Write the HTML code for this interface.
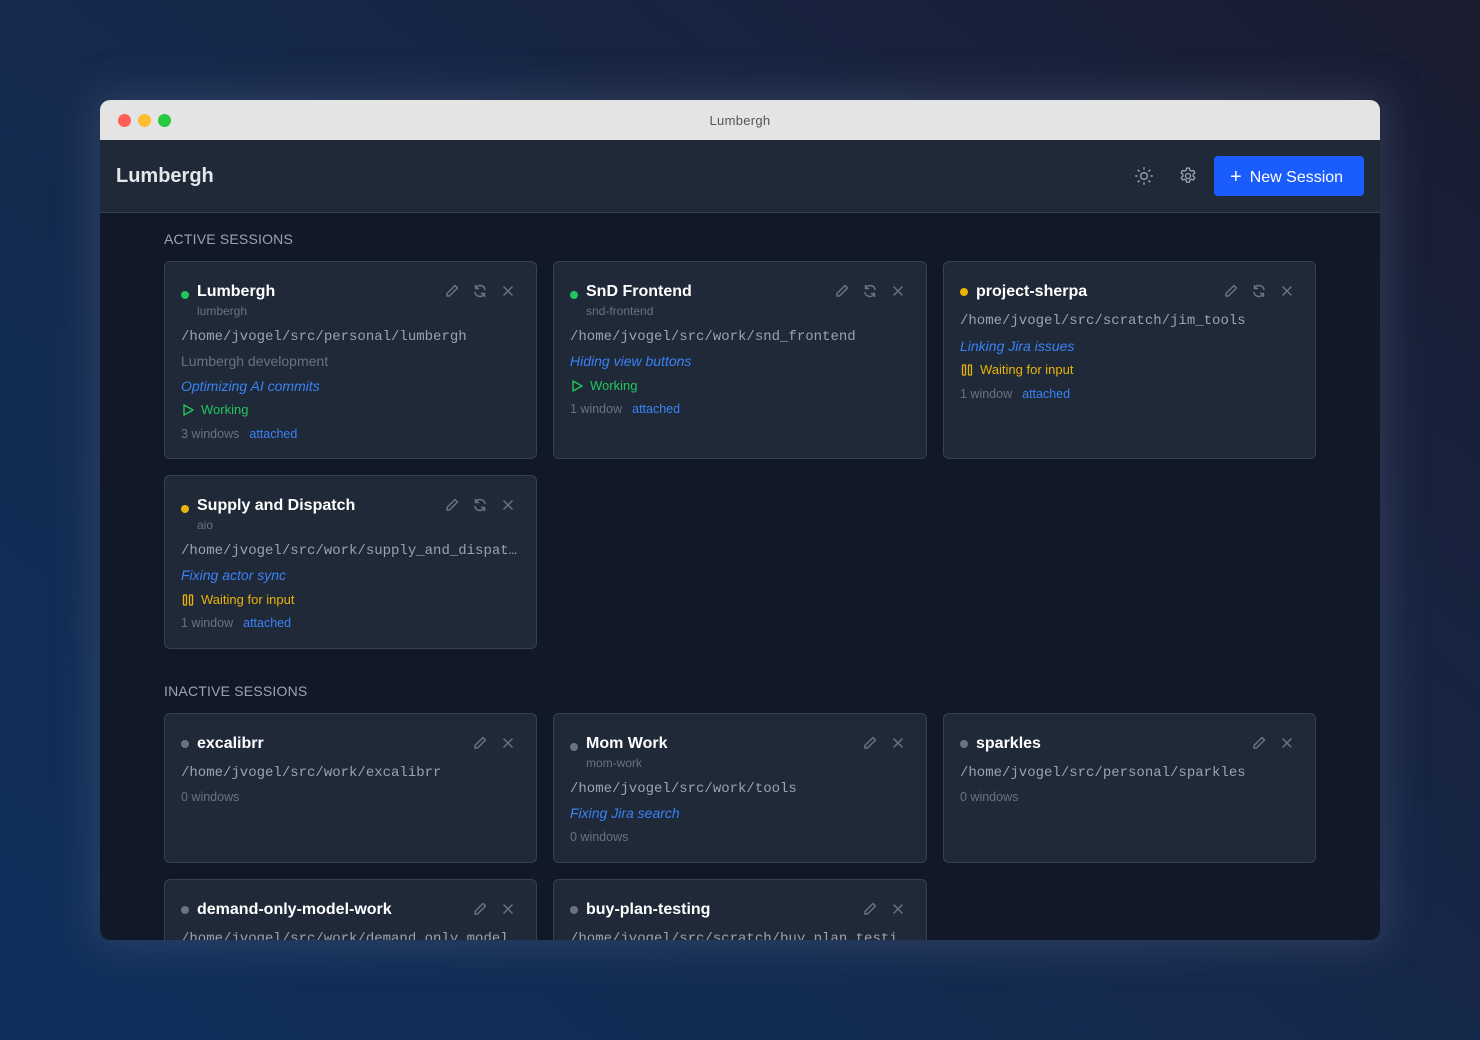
<!DOCTYPE html>
<html><head><meta charset="utf-8">
<style>
*{box-sizing:border-box;margin:0;padding:0}
body{width:1480px;height:1040px;overflow:hidden;background:linear-gradient(40deg,#0f305c 0%,#152a4e 45%,#1a1c30 100%);font-family:"Liberation Sans","Noto Sans CJK SC",sans-serif;position:relative}
.win{position:absolute;left:100px;top:100px;width:1280px;height:840px;border-radius:10px;overflow:hidden;background:#111827;box-shadow:0 0 40px 8px rgba(90,100,130,.35)}
.tb{height:40px;background:#e4e4e4;position:relative;text-align:center;line-height:42px;font-size:13px;color:#555;letter-spacing:.3px}
.dot3{position:absolute;top:14px;width:13px;height:13px;border-radius:50%}
.hd{height:73px;background:#1f2937;border-bottom:1px solid #374151;position:relative}
.hd .t{position:absolute;left:16px;top:25px;font-size:20px;font-weight:bold;color:#e5e7eb}
.btn{position:absolute;left:1114px;top:16px;width:150px;height:40px;background:#1b5cff;border-radius:4px;color:#fff;font-size:16px;line-height:40px;padding-left:16px}
.sec{position:absolute;left:64px;font-size:14px;color:#9ca3af;letter-spacing:.2px}
.grid{position:absolute;left:64px;width:1152px;display:grid;grid-template-columns:373px 374px 373px;column-gap:16px;row-gap:16px}
.card{background:#1f2937;border:1px solid #374151;border-radius:6px;padding:19px 16px 0 16px;position:relative;overflow:hidden}
.nm{height:22px;line-height:22px;font-size:16px;font-weight:bold;color:#fff;padding-left:16px;position:relative}
.nm i{position:absolute;left:0;top:10px;width:8px;height:8px;border-radius:50%}
.sub{height:16px;line-height:16px;font-size:12px;color:#6b7280;padding-left:16px}
.ln{height:24.5px;line-height:24.5px;font-size:14px;white-space:nowrap;overflow:hidden}
.nosub{margin-top:6px}
.hassub{margin-top:5.5px}
.path{font-family:"Liberation Mono",monospace;color:#9ca3af;text-overflow:ellipsis}
.desc{color:#6b7280}
.task{color:#3b82f6;font-style:italic}
.st{font-size:13px;display:flex;align-items:center;gap:6px}
.win2{height:22px;line-height:22px;font-size:12.5px;color:#6b7280}
.win2 span{color:#3b82f6;margin-left:10px}
.ic{position:absolute;top:21px;right:20px;display:flex;gap:12px}
.ic svg{width:16px;height:16px;stroke:#6b7280;fill:none;stroke-width:1.5;stroke-linecap:round;stroke-linejoin:round}
</style></head><body>
<div class="win">
<div class="tb">Lumbergh
<div class="dot3" style="left:18px;background:#ff5f57"></div>
<div class="dot3" style="left:38px;background:#febc2e"></div>
<div class="dot3" style="left:58px;background:#28c840"></div>
</div>
<div class="hd"><div class="t">Lumbergh</div>
<svg style="position:absolute;left:1034px;top:26px" width="20" height="20" viewBox="0 0 24 24" fill="none" stroke="#9ca3af" stroke-width="1.6" stroke-linecap="round"><circle cx="12" cy="12" r="4"/><path d="M12 2v2M12 20v2M2 12h2M20 12h2M4.9 4.9l1.4 1.4M17.7 17.7l1.4 1.4M4.9 19.1l1.4-1.4M17.7 6.3l1.4-1.4"/></svg>
<svg style="position:absolute;left:1078px;top:26px" width="20" height="20" viewBox="0 0 24 24" fill="none" stroke="#9ca3af" stroke-width="1.6" stroke-linejoin="round"><path d="M10.3 2.5h3.4l.5 2.6 1.8 1 2.5-.9 1.7 2.9-2 1.8v2.2l2 1.8-1.7 2.9-2.5-.9-1.8 1-.5 2.6h-3.4l-.5-2.6-1.8-1-2.5.9-1.7-2.9 2-1.8v-2.2l-2-1.8 1.7-2.9 2.5.9 1.8-1z"/><circle cx="12" cy="12" r="3"/></svg>
<div class="btn"><span style="font-size:20px;margin-right:8px;position:relative;top:1px">+</span>New Session</div>
</div>

<div class="sec" style="top:131px">ACTIVE SESSIONS</div>
<div class="grid" style="top:161px;grid-template-rows:198px 174px">
 <div class="card">
  <div class="ic"><svg viewBox="0 0 16 16"><path d="M11 2.5l2.5 2.5L5.5 13H3v-2.5z"/></svg><svg viewBox="0 0 16 16"><path d="M13 6.5A5 5 0 0 0 3.8 5M3 9.5A5 5 0 0 0 12.2 11M3.5 2.5V5.5h3M12.5 13.5v-3h-3"/></svg><svg viewBox="0 0 16 16"><path d="M4 4l8 8M12 4l-8 8"/></svg></div>
  <div class="nm"><i style="background:#22c55e"></i>Lumbergh</div>
  <div class="sub">lumbergh</div>
  <div class="ln path hassub">/home/jvogel/src/personal/lumbergh</div>
  <div class="ln desc">Lumbergh development</div>
  <div class="ln task">Optimizing AI commits</div>
  <div class="ln st" style="color:#22c55e"><svg width="14" height="14" viewBox="0 0 14 14" fill="none" stroke="#22c55e" stroke-width="1.4" stroke-linejoin="round"><path d="M3 2l9 5-9 5z"/></svg>Working</div>
  <div class="win2">3 windows<span>attached</span></div>
 </div>
 <div class="card">
  <div class="ic"><svg viewBox="0 0 16 16"><path d="M11 2.5l2.5 2.5L5.5 13H3v-2.5z"/></svg><svg viewBox="0 0 16 16"><path d="M13 6.5A5 5 0 0 0 3.8 5M3 9.5A5 5 0 0 0 12.2 11M3.5 2.5V5.5h3M12.5 13.5v-3h-3"/></svg><svg viewBox="0 0 16 16"><path d="M4 4l8 8M12 4l-8 8"/></svg></div>
  <div class="nm"><i style="background:#22c55e"></i>SnD Frontend</div>
  <div class="sub">snd-frontend</div>
  <div class="ln path hassub">/home/jvogel/src/work/snd_frontend</div>
  <div class="ln task">Hiding view buttons</div>
  <div class="ln st" style="color:#22c55e"><svg width="14" height="14" viewBox="0 0 14 14" fill="none" stroke="#22c55e" stroke-width="1.4" stroke-linejoin="round"><path d="M3 2l9 5-9 5z"/></svg>Working</div>
  <div class="win2">1 window<span>attached</span></div>
 </div>
 <div class="card">
  <div class="ic"><svg viewBox="0 0 16 16"><path d="M11 2.5l2.5 2.5L5.5 13H3v-2.5z"/></svg><svg viewBox="0 0 16 16"><path d="M13 6.5A5 5 0 0 0 3.8 5M3 9.5A5 5 0 0 0 12.2 11M3.5 2.5V5.5h3M12.5 13.5v-3h-3"/></svg><svg viewBox="0 0 16 16"><path d="M4 4l8 8M12 4l-8 8"/></svg></div>
  <div class="nm"><i style="background:#eab308;top:7px"></i>project-sherpa</div>
  <div class="ln path nosub">/home/jvogel/src/scratch/jim_tools</div>
  <div class="ln task">Linking Jira issues</div>
  <div class="ln st" style="color:#eab308"><svg width="14" height="14" viewBox="0 0 14 14" fill="none" stroke="#eab308" stroke-width="1.3"><rect x="2.5" y="2" width="3" height="10" rx=".5"/><rect x="8.5" y="2" width="3" height="10" rx=".5"/></svg>Waiting for input</div>
  <div class="win2">1 window<span>attached</span></div>
 </div>
 <div class="card">
  <div class="ic"><svg viewBox="0 0 16 16"><path d="M11 2.5l2.5 2.5L5.5 13H3v-2.5z"/></svg><svg viewBox="0 0 16 16"><path d="M13 6.5A5 5 0 0 0 3.8 5M3 9.5A5 5 0 0 0 12.2 11M3.5 2.5V5.5h3M12.5 13.5v-3h-3"/></svg><svg viewBox="0 0 16 16"><path d="M4 4l8 8M12 4l-8 8"/></svg></div>
  <div class="nm"><i style="background:#eab308"></i>Supply and Dispatch</div>
  <div class="sub">aio</div>
  <div class="ln path hassub" style="width:340px">/home/jvogel/src/work/supply_and_dispat…</div>
  <div class="ln task">Fixing actor sync</div>
  <div class="ln st" style="color:#eab308"><svg width="14" height="14" viewBox="0 0 14 14" fill="none" stroke="#eab308" stroke-width="1.3"><rect x="2.5" y="2" width="3" height="10" rx=".5"/><rect x="8.5" y="2" width="3" height="10" rx=".5"/></svg>Waiting for input</div>
  <div class="win2">1 window<span>attached</span></div>
 </div>
</div>

<div class="sec" style="top:583px">INACTIVE SESSIONS</div>
<div class="grid" style="top:613px;grid-template-rows:150px 150px">
 <div class="card">
  <div class="ic"><svg viewBox="0 0 16 16"><path d="M11 2.5l2.5 2.5L5.5 13H3v-2.5z"/></svg><svg viewBox="0 0 16 16"><path d="M4 4l8 8M12 4l-8 8"/></svg></div>
  <div class="nm"><i style="background:#6b7280;top:7px"></i>excalibrr</div>
  <div class="ln path nosub">/home/jvogel/src/work/excalibrr</div>
  <div class="win2">0 windows</div>
 </div>
 <div class="card">
  <div class="ic"><svg viewBox="0 0 16 16"><path d="M11 2.5l2.5 2.5L5.5 13H3v-2.5z"/></svg><svg viewBox="0 0 16 16"><path d="M4 4l8 8M12 4l-8 8"/></svg></div>
  <div class="nm"><i style="background:#6b7280"></i>Mom Work</div>
  <div class="sub">mom-work</div>
  <div class="ln path hassub">/home/jvogel/src/work/tools</div>
  <div class="ln task">Fixing Jira search</div>
  <div class="win2">0 windows</div>
 </div>
 <div class="card">
  <div class="ic"><svg viewBox="0 0 16 16"><path d="M11 2.5l2.5 2.5L5.5 13H3v-2.5z"/></svg><svg viewBox="0 0 16 16"><path d="M4 4l8 8M12 4l-8 8"/></svg></div>
  <div class="nm"><i style="background:#6b7280;top:7px"></i>sparkles</div>
  <div class="ln path nosub">/home/jvogel/src/personal/sparkles</div>
  <div class="win2">0 windows</div>
 </div>
 <div class="card">
  <div class="ic"><svg viewBox="0 0 16 16"><path d="M11 2.5l2.5 2.5L5.5 13H3v-2.5z"/></svg><svg viewBox="0 0 16 16"><path d="M4 4l8 8M12 4l-8 8"/></svg></div>
  <div class="nm"><i style="background:#6b7280;top:7px"></i>demand-only-model-work</div>
  <div class="ln path nosub">/home/jvogel/src/work/demand_only_model</div>
  <div class="win2">0 windows</div>
 </div>
 <div class="card">
  <div class="ic"><svg viewBox="0 0 16 16"><path d="M11 2.5l2.5 2.5L5.5 13H3v-2.5z"/></svg><svg viewBox="0 0 16 16"><path d="M4 4l8 8M12 4l-8 8"/></svg></div>
  <div class="nm"><i style="background:#6b7280;top:7px"></i>buy-plan-testing</div>
  <div class="ln path nosub">/home/jvogel/src/scratch/buy_plan_testi</div>
  <div class="win2">0 windows</div>
 </div>
</div>
</div>
</body></html>
